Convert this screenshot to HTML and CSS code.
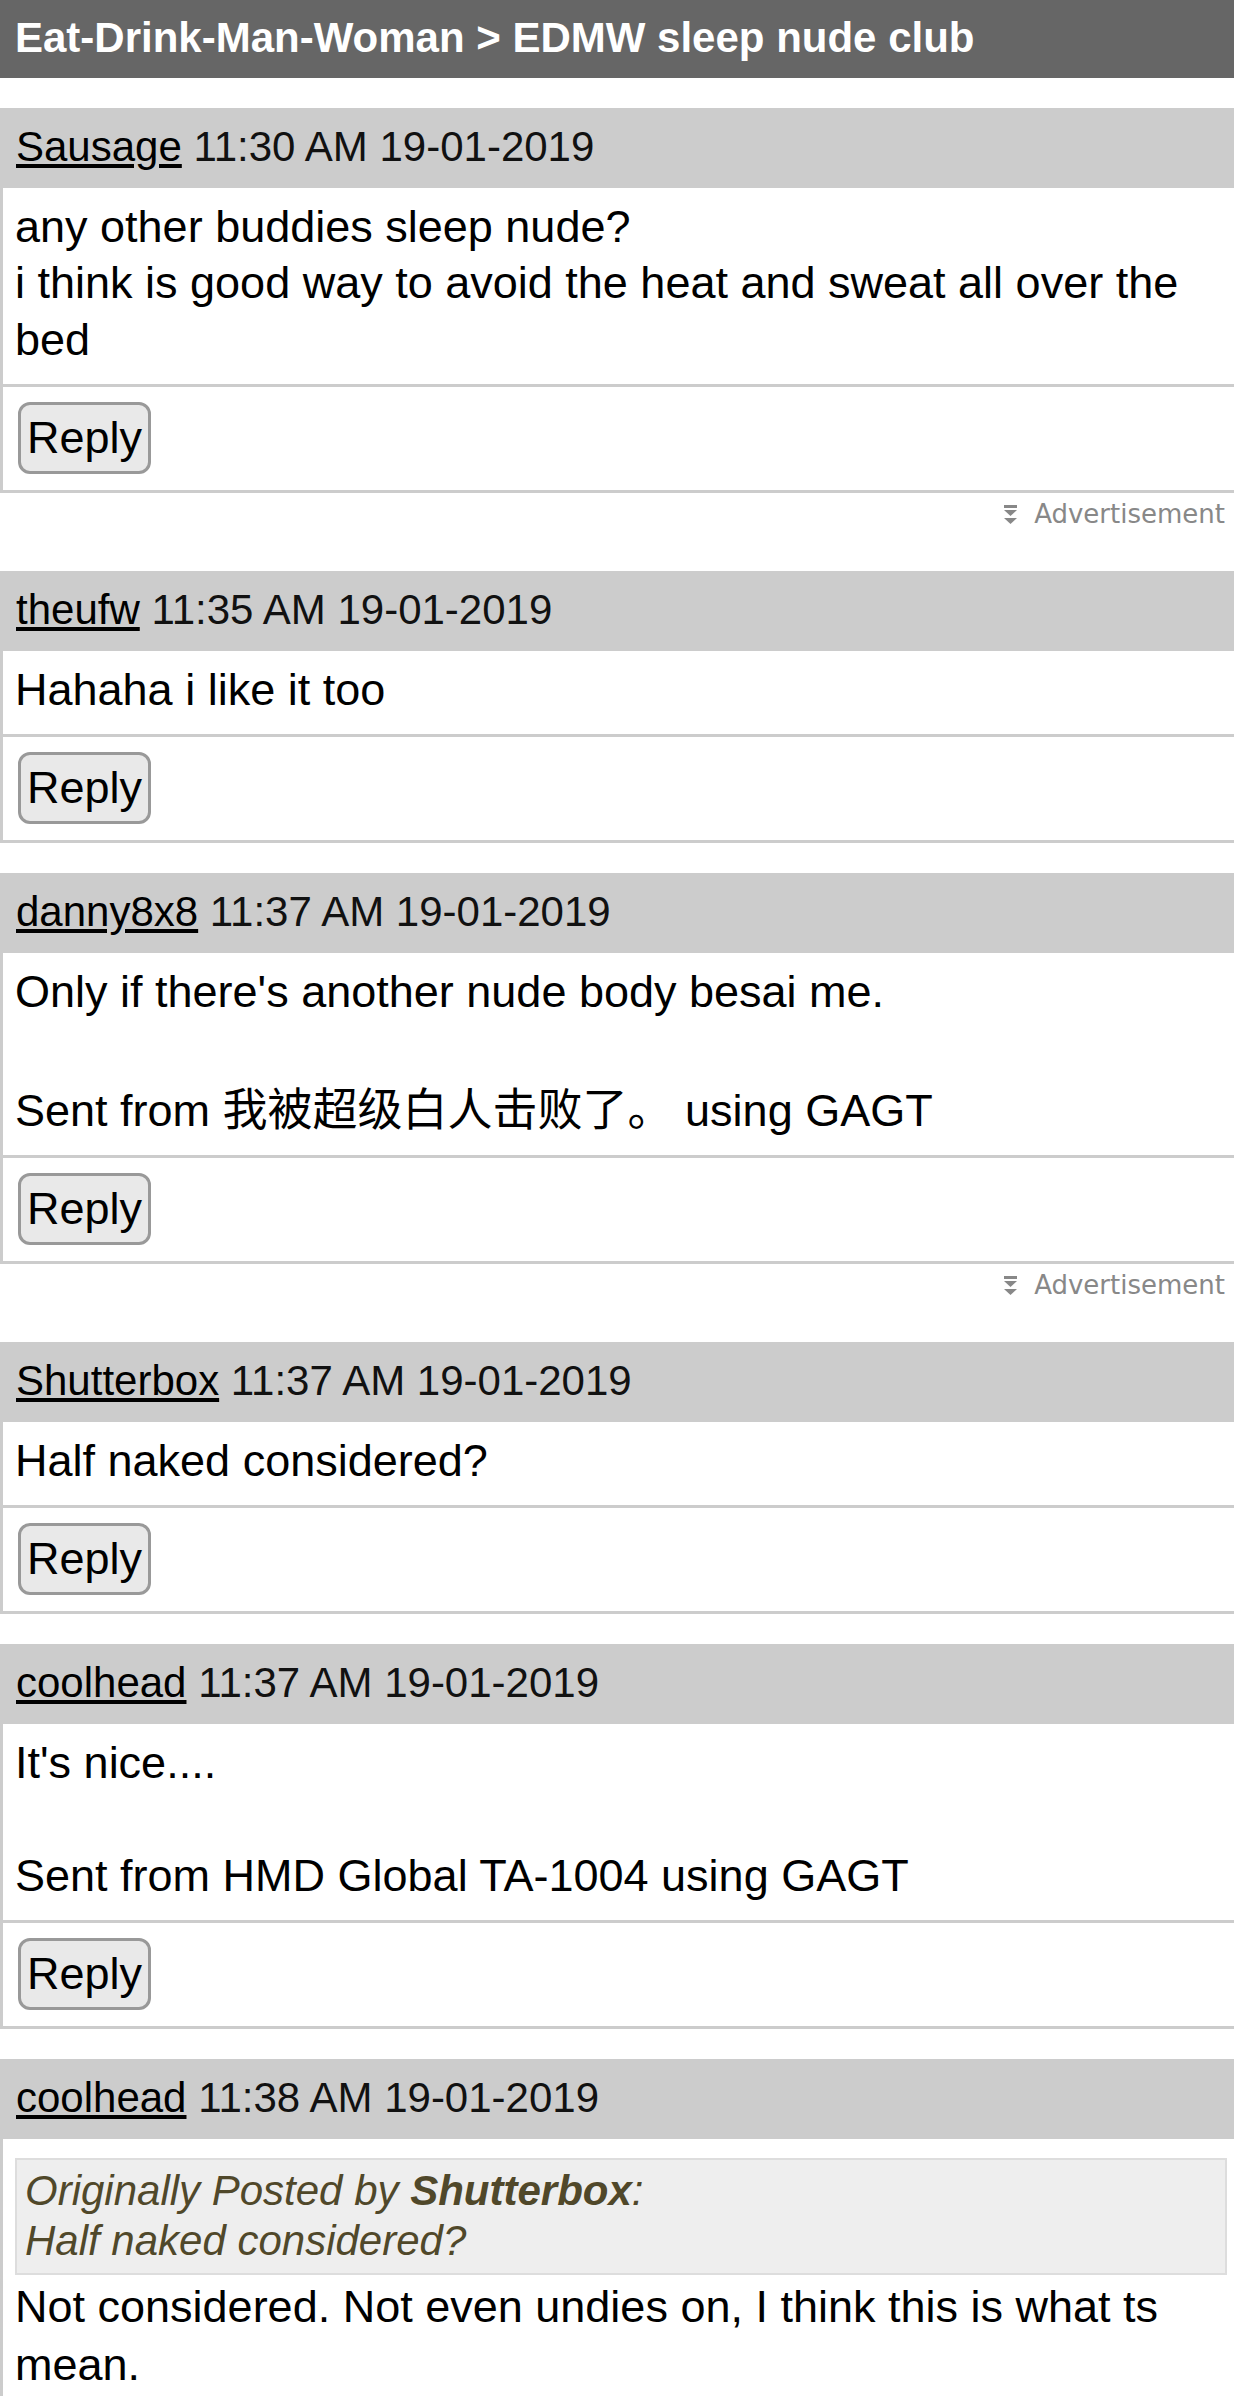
FILE: index.html
```html
<!DOCTYPE html>
<html lang="en">
<head>
    <meta charset="UTF-8">
    <title>EDMW sleep nude club</title>
    <link rel="stylesheet" href="styles.css">
</head>
<body>
<div class="title">Eat-Drink-Man-Woman &gt; EDMW sleep nude club</div>

<div class="post">
    <div class="post-head"><a href="#">Sausage</a> 11:30 AM 19-01-2019</div>
    <div class="post-body">any other buddies sleep nude?<br>i think is good way to avoid the heat and sweat all over the bed</div>
    <div class="post-foot"><button class="reply">Reply</button></div>
</div>
<div class="ad">
    <svg class="ad-icon" width="15" height="20" viewBox="0 0 15 20"><rect x="1" y="0" width="13" height="3"/><polygon points="1,5 14,5 7.5,11"/><polygon points="1,13 14,13 7.5,19"/></svg>
    <span>Advertisement</span>
</div>

<div class="post">
    <div class="post-head"><a href="#">theufw</a> 11:35 AM 19-01-2019</div>
    <div class="post-body">Hahaha i like it too</div>
    <div class="post-foot"><button class="reply">Reply</button></div>
</div>

<div class="post">
    <div class="post-head"><a href="#">danny8x8</a> 11:37 AM 19-01-2019</div>
    <div class="post-body">Only if there's another nude body besai me.<br><br>Sent from <span class="cjk">我被超级白人击败了。</span> using GAGT</div>
    <div class="post-foot"><button class="reply">Reply</button></div>
</div>
<div class="ad">
    <svg class="ad-icon" width="15" height="20" viewBox="0 0 15 20"><rect x="1" y="0" width="13" height="3"/><polygon points="1,5 14,5 7.5,11"/><polygon points="1,13 14,13 7.5,19"/></svg>
    <span>Advertisement</span>
</div>

<div class="post">
    <div class="post-head"><a href="#">Shutterbox</a> 11:37 AM 19-01-2019</div>
    <div class="post-body">Half naked considered?</div>
    <div class="post-foot"><button class="reply">Reply</button></div>
</div>

<div class="post">
    <div class="post-head"><a href="#">coolhead</a> 11:37 AM 19-01-2019</div>
    <div class="post-body">It's nice....<br><br>Sent from HMD Global TA-1004 using GAGT</div>
    <div class="post-foot"><button class="reply">Reply</button></div>
</div>

<div class="post">
    <div class="post-head"><a href="#">coolhead</a> 11:38 AM 19-01-2019</div>
    <div class="post-body">
        <div class="quote">Originally Posted by <b>Shutterbox</b>:<br>Half naked considered?</div>
        <div class="after-quote">Not considered. Not even undies on, I think this is what ts mean.</div>
    </div>
    <div class="post-foot"><button class="reply">Reply</button></div>
</div>
</body>
</html>
```

FILE: styles.css
```css
* {
    margin: 0;
    padding: 0;
}

body {
    font-family: "Liberation Sans", Arial, "Noto Sans CJK SC", sans-serif;
    font-size: 45px;
    color: #000;
    background: #fff;
    overflow-x: hidden;
}

.title {
    background-color: #666;
    color: #fff;
    font-size: 42px;
    font-weight: bold;
    padding: 14px 15px 16px 15px;
}

.post {
    margin-top: 30px;
    border-left: 3px solid #ccc;
    border-bottom: 3px solid #ccc;
}

.post-head {
    background-color: #ccc;
    font-size: 42px;
    color: #111;
    padding: 15px 13px 17px 13px;
}

.post-head a {
    color: #000;
    text-decoration: underline;
}

.post-body {
    line-height: 1.25;
    padding: 11px 7px 16px 12px;
}

.cjk {
    font-family: "Noto Sans CJK SC", sans-serif;
    line-height: 1.33;
}

.post-foot {
    border-top: 3px solid #ccc;
    padding: 15px 12px 16px 15px;
}

.reply {
    display: block;
    font-family: inherit;
    font-size: 45px;
    line-height: normal;
    color: #000;
    background-color: #e9e9e9;
    border: 3px solid #999;
    border-radius: 12px;
    padding: 7px 6px;
}

.quote {
    margin-top: 8px;
    background-color: #eee;
    border: 2px solid #ddd;
    padding: 6px 8px;
    font-size: 42px;
    line-height: 1.2;
    font-style: italic;
    color: #50482a;
}

.after-quote {
    padding-top: 3px;
    line-height: 1.3;
}

.ad {
    height: 42px;
    padding: 6px 9px 0;
    text-align: right;
    font-family: "DejaVu Sans", sans-serif;
    font-size: 26px;
    line-height: 30px;
    color: #888;
}

.ad-icon {
    fill: #888;
    vertical-align: -2px;
    margin-right: 8px;
}
```
